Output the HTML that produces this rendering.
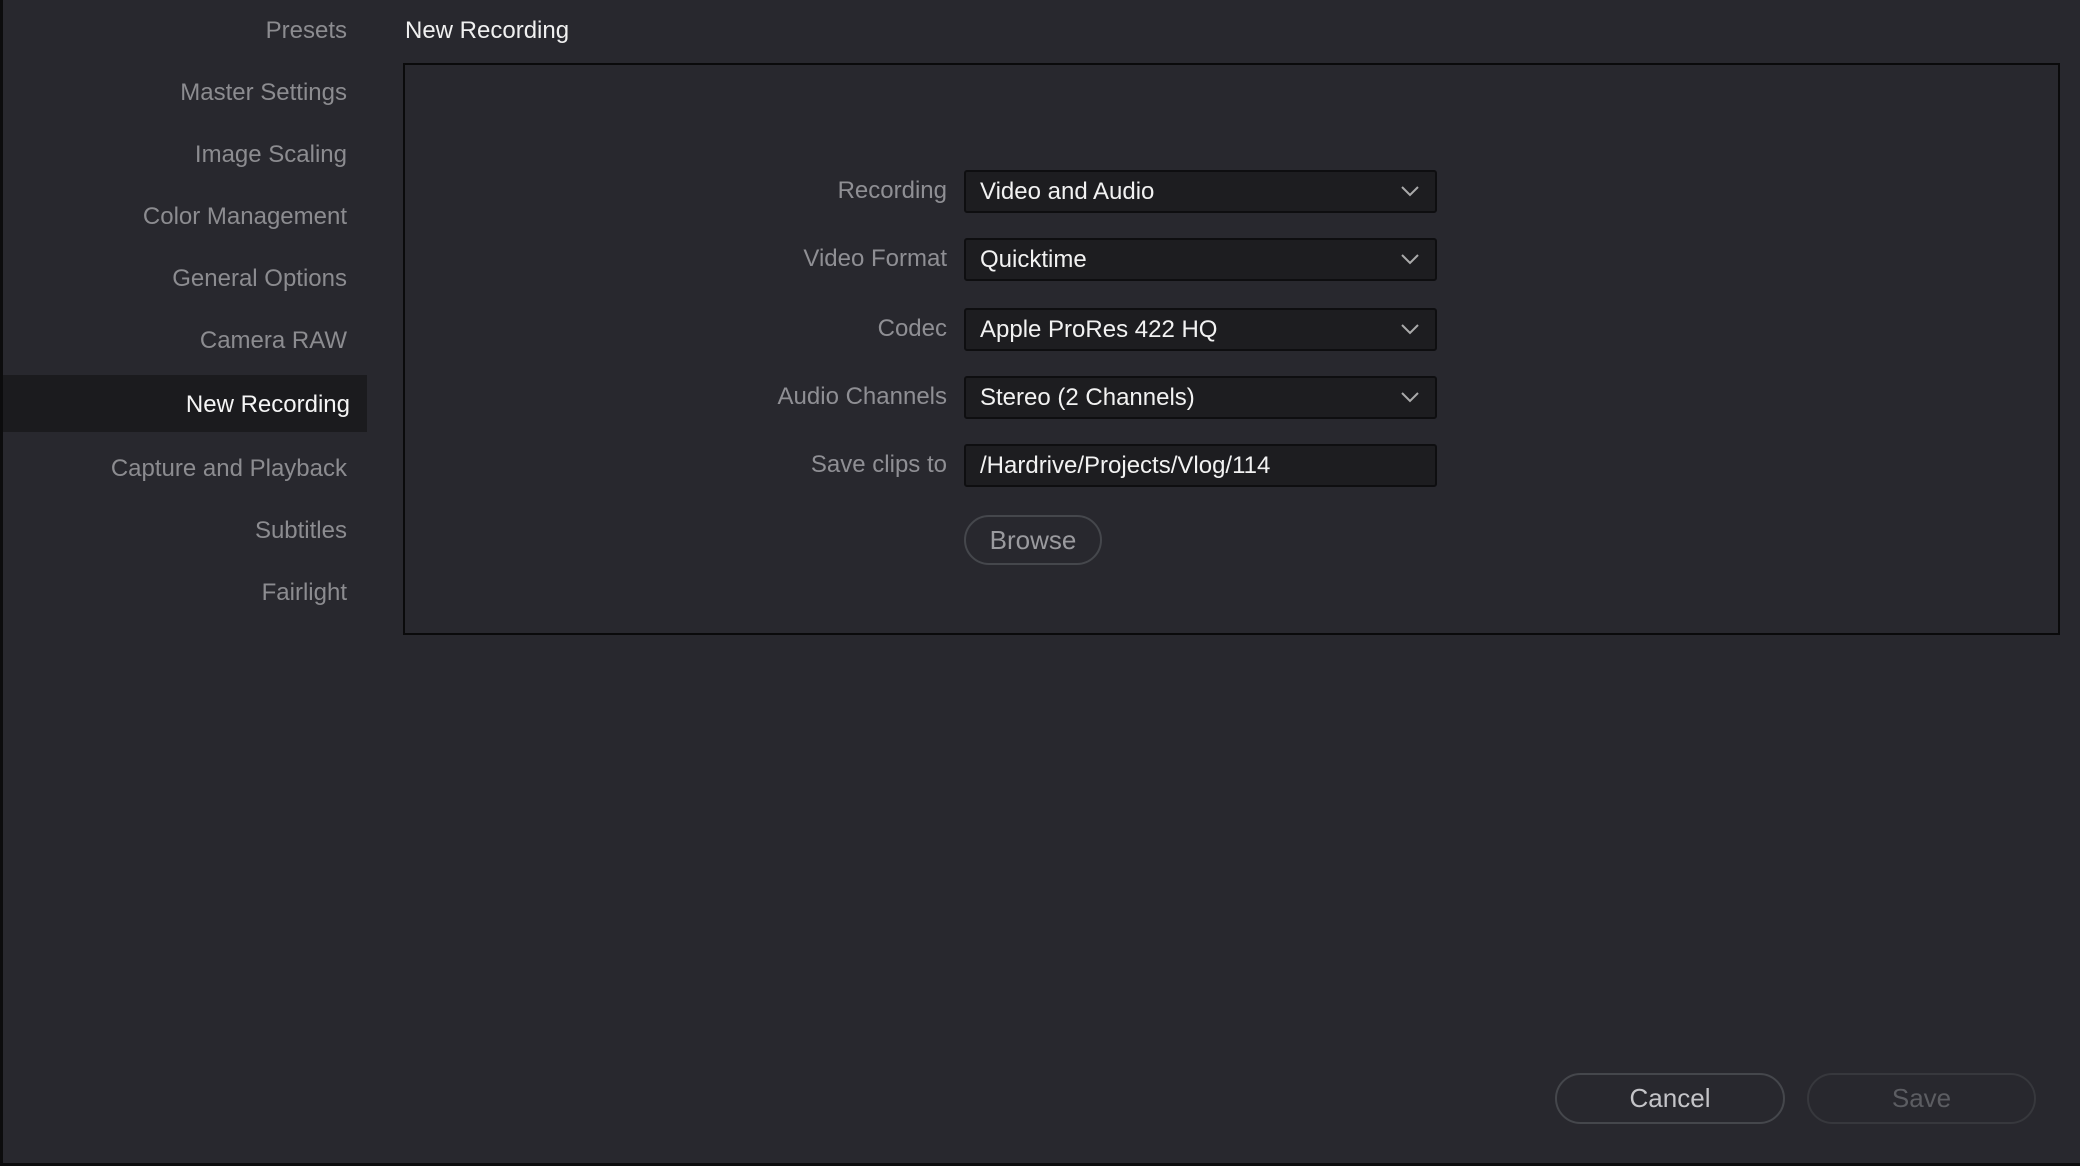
<!DOCTYPE html>
<html><head><style>
html,body{margin:0;padding:0}
body{width:2080px;height:1166px;background:#28282e;position:relative;overflow:hidden;font-family:"Liberation Sans",sans-serif;}
.frame{position:absolute;left:0;top:0;width:2080px;height:1166px;box-sizing:border-box;border-left:3px solid #0c0c0d;border-bottom:3px solid #0c0c0d;}
.nav{position:absolute;right:calc(2080px - 347px);font-size:24px;color:#8c8c90;white-space:nowrap;transform:translateY(-50%);}
.sel{position:absolute;left:3px;top:375px;width:364px;height:57px;background:#1b1b1e;}
.title{position:absolute;left:405px;top:31px;transform:translateY(-50%);font-size:24px;color:#f0f0f0;}
.panel{position:absolute;left:403px;top:63px;width:1657px;height:572px;box-sizing:border-box;border:2px solid #0a0a0b;}
.lab{position:absolute;right:calc(2080px - 947px);font-size:24px;color:#8f8f94;transform:translateY(-50%);white-space:nowrap;}
.dd{position:absolute;left:964px;width:473px;height:43px;box-sizing:border-box;background:#1d1d20;border:2px solid #0e0e10;border-radius:3px;color:#f2f2f2;font-size:24px;line-height:39px;padding-left:14px;}
.dd svg{position:absolute;right:16px;top:13px}
.btn{position:absolute;box-sizing:border-box;border:2px solid #45474c;border-radius:30px;text-align:center;font-size:26px;}
</style></head><body>
<div class="frame"></div>
<div class="sel"></div>
<div class="nav" style="top:31px">Presets</div>
<div class="nav" style="top:93px">Master Settings</div>
<div class="nav" style="top:155px">Image Scaling</div>
<div class="nav" style="top:217px">Color Management</div>
<div class="nav" style="top:279px">General Options</div>
<div class="nav" style="top:341px">Camera RAW</div>
<div class="nav" style="top:405px;right:1730px;color:#f5f5f5">New Recording</div>
<div class="nav" style="top:469px">Capture and Playback</div>
<div class="nav" style="top:531px">Subtitles</div>
<div class="nav" style="top:593px">Fairlight</div>
<div class="title">New Recording</div>
<div class="panel"></div>
<div class="lab" style="top:191px">Recording</div>
<div class="dd" style="top:170px">Video and Audio<svg width="18" height="12" viewBox="0 0 18 12"><path d="M1 2 L9 10 L17 2" fill="none" stroke="#aaa" stroke-width="2"/></svg></div>
<div class="lab" style="top:259px">Video Format</div>
<div class="dd" style="top:238px">Quicktime<svg width="18" height="12" viewBox="0 0 18 12"><path d="M1 2 L9 10 L17 2" fill="none" stroke="#aaa" stroke-width="2"/></svg></div>
<div class="lab" style="top:329px">Codec</div>
<div class="dd" style="top:308px">Apple ProRes 422 HQ<svg width="18" height="12" viewBox="0 0 18 12"><path d="M1 2 L9 10 L17 2" fill="none" stroke="#aaa" stroke-width="2"/></svg></div>
<div class="lab" style="top:397px">Audio Channels</div>
<div class="dd" style="top:376px">Stereo (2 Channels)<svg width="18" height="12" viewBox="0 0 18 12"><path d="M1 2 L9 10 L17 2" fill="none" stroke="#aaa" stroke-width="2"/></svg></div>
<div class="lab" style="top:465px">Save clips to</div>
<div class="dd" style="top:444px">/Hardrive/Projects/Vlog/114</div>
<div class="btn" style="left:964px;top:515px;width:138px;height:50px;line-height:46px;color:#9a9a9e;">Browse</div>
<div class="btn" style="left:1555px;top:1073px;width:230px;height:51px;line-height:47px;color:#c4c4c8;">Cancel</div>
<div class="btn" style="left:1807px;top:1073px;width:229px;height:51px;line-height:47px;color:#5c5d62;border-color:#37383d;">Save</div>
</body></html>
